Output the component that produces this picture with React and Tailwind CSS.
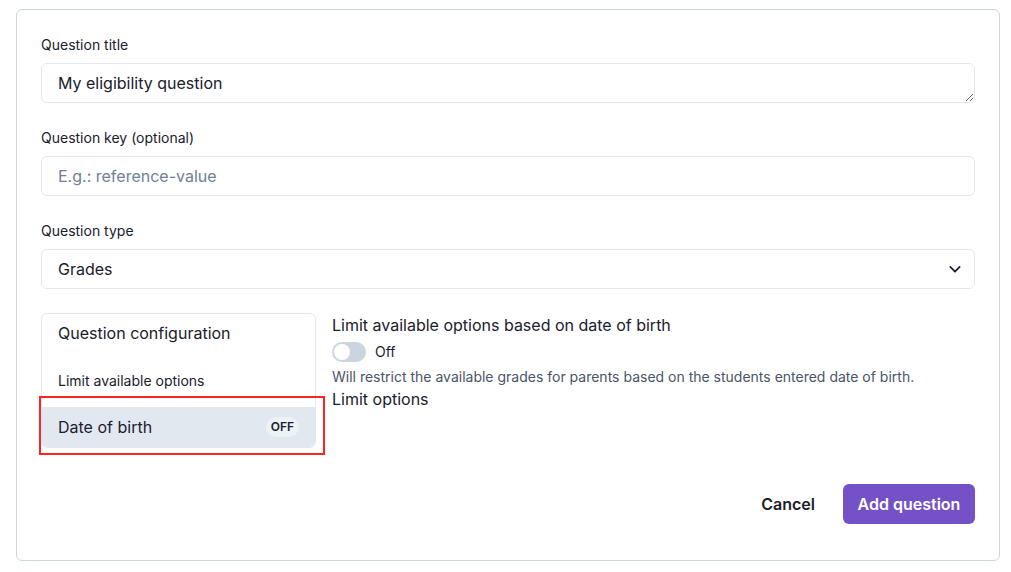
import React from 'react';

function Field({ label, children }) {
  return (
    <div className="flex flex-col">
      <label className="text-sm leading-5 mb-2 text-[#1a202c]">{label}</label>
      {children}
    </div>
  );
}

function App() {
  return (
    <div className="min-h-[572px] bg-white pt-[9px] pl-4 font-['Inter',sans-serif] text-[#1a202c]">
      <div className="w-[984px] h-[552px] border border-[#cbd5e0] rounded-md px-6 pt-[25px] flex flex-col">

        {/* Form fields */}
        <div className="flex flex-col gap-[25px]">
          <Field label="Question title">
            <textarea
              className="h-10 w-full rounded-md border border-[#e2e8f0] px-4 py-[7px] text-base leading-6 outline-none resize-y"
              defaultValue="My eligibility question"
            />
          </Field>

          <Field label="Question key (optional)">
            <input
              className="h-10 w-full rounded-md border border-[#e2e8f0] px-4 text-base outline-none placeholder:text-[#718096]"
              placeholder="E.g.: reference-value"
            />
          </Field>

          <Field label="Question type">
            <div className="relative">
              <div className="h-10 w-full rounded-md border border-[#e2e8f0] px-4 flex items-center text-base">Grades</div>
              <svg className="absolute right-[13px] top-[13px]" width="14" height="14" viewBox="0 0 24 24" fill="none" stroke="#1a202c" strokeWidth="3" strokeLinecap="round" strokeLinejoin="round">
                <path d="M4 8.5l8 8 8-8" />
              </svg>
            </div>
          </Field>
        </div>

        {/* Configuration */}
        <div className="relative mt-6 flex gap-4">
          <div className="w-[275px] border border-[#e2e8f0] rounded-md flex flex-col">
            <div className="px-4 pt-[7px] text-base leading-6">Question configuration</div>
            <div className="px-4 mt-[26px] text-sm leading-5">Limit available options</div>
            <div className="mt-4 h-10 bg-[#e2e8f0] rounded-b-md px-4 flex items-center justify-between">
              <span className="text-base">Date of birth</span>
              <span className="h-5 px-[5px] rounded-full bg-[#edf2f7] text-xs font-semibold flex items-center">OFF</span>
            </div>
          </div>

          <div className="flex flex-col">
            <div className="text-base leading-6">Limit available options based on date of birth</div>
            <div className="flex items-center gap-[9px] h-6 mt-[3px]">
              <span className="w-[34px] h-5 rounded-full bg-[#cbd5e0] p-[2px] flex">
                <span className="w-4 h-4 rounded-full bg-white"></span>
              </span>
              <span className="text-sm">Off</span>
            </div>
            <div className="text-sm leading-5 mt-[3px] text-[#4a5568]">Will restrict the available grades for parents based on the students entered date of birth.</div>
            <div className="text-base leading-6">Limit options</div>
          </div>

          {/* Highlight annotation */}
          <div className="absolute left-[-2px] top-[83px] w-[286px] h-[59px] border-2 border-[#ff2424]"></div>
        </div>

        {/* Actions */}
        <div className="mt-[36px] flex justify-end gap-3">
          <button className="h-10 px-4 rounded-md text-base font-semibold text-[#1a202c]">Cancel</button>
          <button className="h-10 w-[132px] rounded-md bg-[#7451c7] text-base font-semibold text-white">Add question</button>
        </div>
      </div>
    </div>
  );
}

export default App;
